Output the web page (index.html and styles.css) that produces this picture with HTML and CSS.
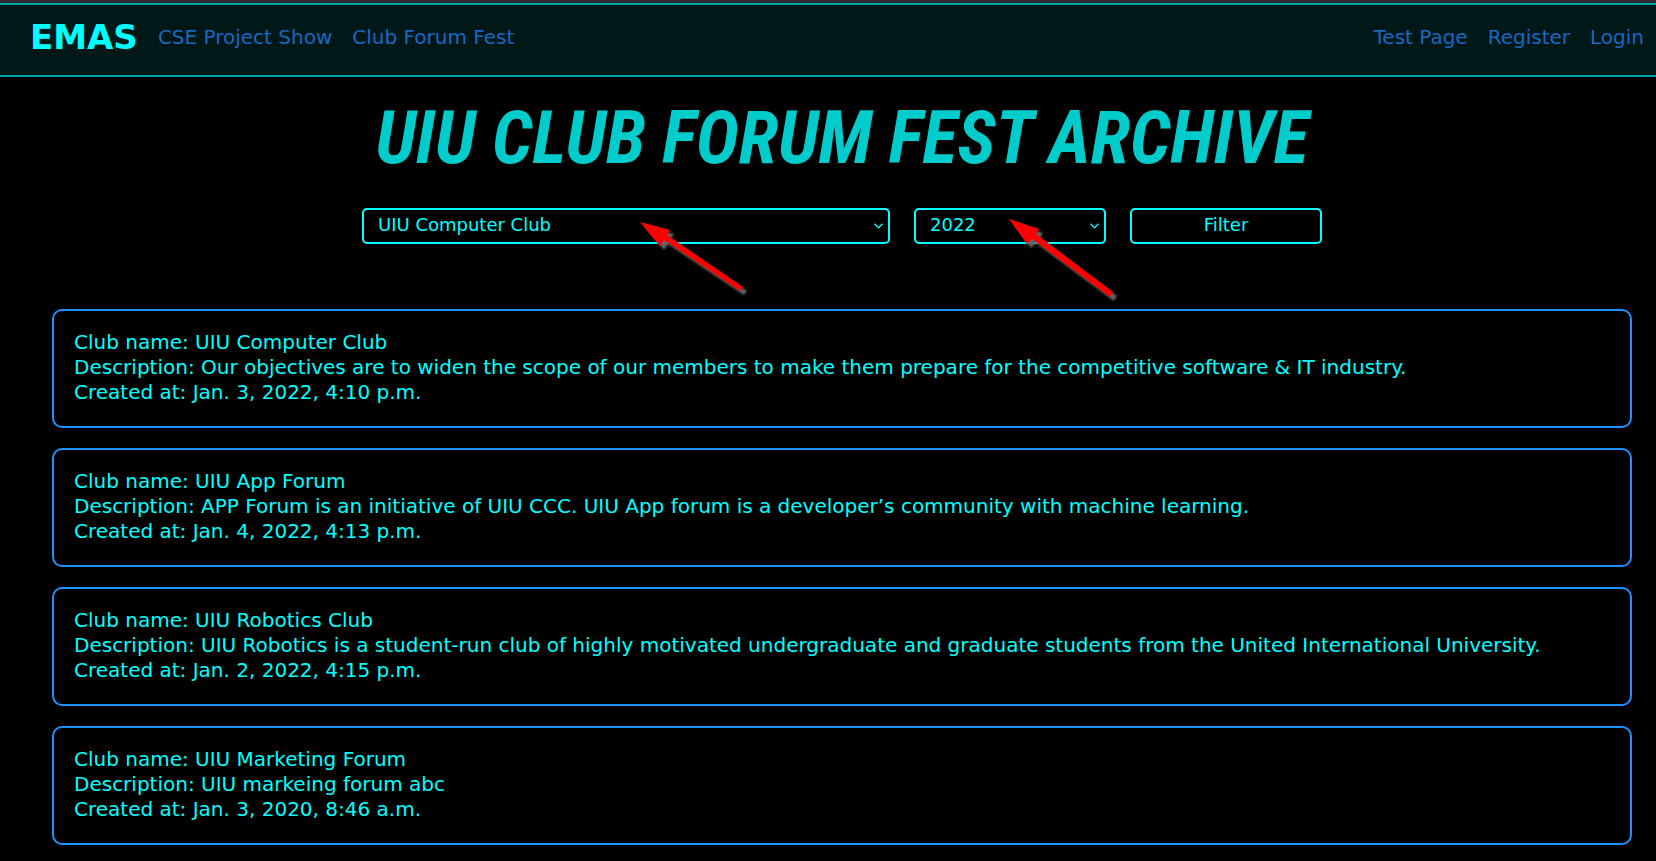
FILE: index.html
```
<!DOCTYPE html>
<html lang="en">
<head>
<meta charset="utf-8">
<title>UIU Club Forum Fest Archive</title>
<link rel="stylesheet" href="styles.css">
</head>
<body>
<nav class="navbar">
  <a class="brand" href="#">EMAS</a>
  <div class="nav-links">
    <a href="#">CSE Project Show</a>
    <a href="#">Club Forum Fest</a>
  </div>
  <div class="nav-links nav-end">
    <a href="#">Test Page</a>
    <a href="#">Register</a>
    <a href="#">Login</a>
  </div>
</nav>
<main class="page">
  <h1 class="title">UIU CLUB FORUM FEST ARCHIVE</h1>
  <form class="filter">
    <div class="field">
      <select class="control" aria-label="Club">
        <option>UIU Computer Club</option>
        <option>UIU App Forum</option>
        <option>UIU Robotics Club</option>
        <option>UIU Marketing Forum</option>
      </select>
      <svg class="chevron" viewBox="0 0 9 6" aria-hidden="true"><path d="M.5 .8 4.500 4.800 8.500 .8"/></svg>
    </div>
    <div class="field">
      <select class="control" aria-label="Year">
        <option>2022</option>
        <option>2020</option>
      </select>
      <svg class="chevron" viewBox="0 0 9 6" aria-hidden="true"><path d="M.5 .8 4.500 4.800 8.500 .8"/></svg>
    </div>
    <button class="control submit" type="button">Filter</button>
    <svg class="arrow arrow-club" viewBox="0 0 110 80" aria-hidden="true">
      <path class="arrow-shadow" d="M0 0 30 8 27 13 103 65 100 69 24 18 20 24Z"/>
      <path class="arrow-body" d="M0 0 30 8 27 13 103 65 100 69 24 18 20 24Z"/>
    </svg>
    <svg class="arrow arrow-year" viewBox="0 0 110 84" aria-hidden="true">
      <path class="arrow-shadow" d="M0 0 30 10 27 15 104 73 101 78 23 20 18 25Z"/>
      <path class="arrow-body" d="M0 0 30 10 27 15 104 73 101 78 23 20 18 25Z"/>
    </svg>
  </form>
  <section class="cards">
    <article class="card">
      <p>Club name: UIU Computer Club</p>
      <p>Description: Our objectives are to widen the scope of our members to make them prepare for the competitive software &amp; IT industry.</p>
      <p>Created at: Jan. 3, 2022, 4:10 p.m.</p>
    </article>
    <article class="card">
      <p>Club name: UIU App Forum</p>
      <p>Description: APP Forum is an initiative of UIU CCC. UIU App forum is a developer’s community with machine learning.</p>
      <p>Created at: Jan. 4, 2022, 4:13 p.m.</p>
    </article>
    <article class="card">
      <p>Club name: UIU Robotics Club</p>
      <p>Description: UIU Robotics is a student-run club of highly motivated undergraduate and graduate students from the United International University.</p>
      <p>Created at: Jan. 2, 2022, 4:15 p.m.</p>
    </article>
    <article class="card">
      <p>Club name: UIU Marketing Forum</p>
      <p>Description: UIU markeing forum abc</p>
      <p>Created at: Jan. 3, 2020, 8:46 a.m.</p>
    </article>
  </section>
</main>
</body>
</html>
```
FILE: styles.css
```
* { box-sizing: border-box; }
body {
  margin: 0;
  border-top: 3px solid #2b2a33;
  background: #000;
  color: #0ff;
  font-family: "DejaVu Sans", sans-serif;
  font-size: 20px;
  line-height: 25px;
}
.navbar {
  display: flex;
  align-items: center;
  gap: 20px;
  padding: 12px 12px 18px 30px;
  border: solid #00a3a6;
  border-width: 2px 0;
  background: #001818;
}
.navbar a { text-decoration: none; }
.brand {
  color: #0ff;
  font-size: 34px;
  font-weight: bold;
  line-height: 40px;
}
.nav-links {
  display: flex;
  gap: 20px;
}
.nav-links a { color: #1769c2; }
.nav-end { margin-left: auto; }
.page { padding: 16px 24px 16px 52px; }
.title {
  margin: 0;
  color: #00cccc;
  font-family: "Roboto Condensed", Roboto, sans-serif;
  font-size: 73px;
  font-style: italic;
  font-weight: bold;
  line-height: 90px;
  text-align: center;
}
.filter {
  position: relative;
  display: grid;
  grid-template-columns: 11fr 4fr 4fr;
  gap: 24px;
  max-width: 960px;
  margin: 25px auto 65px;
}
.field { display: grid; align-items: center; }
.field > * { grid-area: 1 / 1; }
.control {
  width: 100%;
  height: 36px;
  padding: 0 14px 2px;
  border: 2px solid #0ff;
  border-radius: 5px;
  background: #000;
  color: #0ff;
  font: 18px/24px "DejaVu Sans", sans-serif;
  appearance: none;
}
.chevron {
  justify-self: end;
  width: 9px;
  height: 6px;
  margin-right: 7px;
  fill: none;
  stroke: #0ff;
  stroke-width: 1.3;
  pointer-events: none;
}
.arrow {
  position: absolute;
  width: 110px;
  overflow: visible;
  pointer-events: none;
}
.arrow-club { left: 278px; top: 14px; }
.arrow-year { left: 647px; top: 11px; }
.arrow-body { fill: #f00; }
.arrow-shadow {
  fill: #666;
  filter: blur(1px);
  transform: translate(4px, 4px);
}
.cards { display: grid; gap: 20px; }
.card {
  padding: 19px 20px 21px;
  border: 2px solid #1e90ff;
  border-radius: 10px;
}
.card p { margin: 0; }
```
